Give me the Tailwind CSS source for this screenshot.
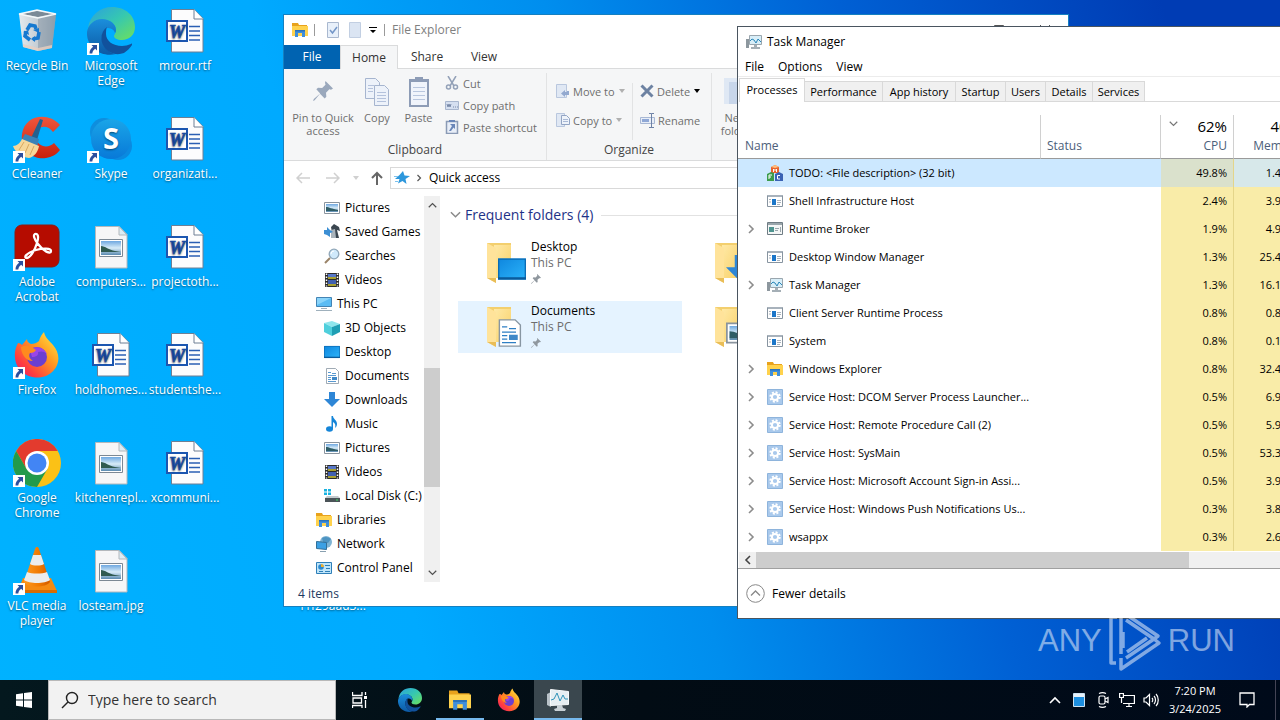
<!DOCTYPE html>
<html lang="en">
<head>
    <meta charset="UTF-8">
    <title>Desktop</title>
    <script src="https://cdn.jsdelivr.net/npm/@tailwindcss/browser@4"></script>
</head>
<body class="h-screen overflow-hidden flex flex-col text-[12px] leading-4 text-black font-['Open_Sans','Noto_Sans',sans-serif] bg-[linear-gradient(75deg,#00b2ff_0%,#00aaff_30%,#008eee_50%,#0060d4_70%,#003cb4_92%)]">

    <!-- icon library -->
    <svg class="absolute size-0" aria-hidden="true">
        <defs>
            <linearGradient id="gEdge" x1="0" y1="0" x2="1" y2="1"><stop offset="0" stop-color="#2b9fe0"/><stop offset=".5" stop-color="#36c8b0"/><stop offset="1" stop-color="#6fe05a"/></linearGradient>
            <linearGradient id="gEdge2" x1="0" y1="0" x2="0" y2="1"><stop offset="0" stop-color="#1b8fdc"/><stop offset="1" stop-color="#0c59a4"/></linearGradient>
            <linearGradient id="gBin" x1="0" y1="0" x2="1" y2="0"><stop offset="0" stop-color="#e4eaee"/><stop offset=".55" stop-color="#c3cbd2"/><stop offset="1" stop-color="#98a7b4"/></linearGradient>
            <linearGradient id="gSky" x1="0" y1="0" x2="0" y2="1"><stop offset="0" stop-color="#1aa5e8"/><stop offset="1" stop-color="#0879d8"/></linearGradient>
            <linearGradient id="gCc" x1="0" y1="0" x2="0" y2="1"><stop offset="0" stop-color="#f0563c"/><stop offset="1" stop-color="#c8200c"/></linearGradient>
            <linearGradient id="gFox" x1="1" y1="0" x2="0" y2="1"><stop offset="0" stop-color="#fff04a"/><stop offset=".4" stop-color="#ff9a20"/><stop offset=".75" stop-color="#ff3d40"/><stop offset="1" stop-color="#e01580"/></linearGradient>
            <linearGradient id="gCone" x1="0" y1="0" x2="1" y2="0"><stop offset="0" stop-color="#ff9a20"/><stop offset=".6" stop-color="#f07800"/><stop offset="1" stop-color="#d05a00"/></linearGradient>
            <linearGradient id="gPhoto" x1="0" y1="0" x2="0" y2="1"><stop offset="0" stop-color="#6fa8e0"/><stop offset=".5" stop-color="#d8ecf8"/><stop offset="1" stop-color="#5a8ab0"/></linearGradient>
            <linearGradient id="gFolder" x1="0" y1="0" x2="1" y2="1"><stop offset="0" stop-color="#ffe9a6"/><stop offset="1" stop-color="#f8d067"/></linearGradient>
            <linearGradient id="gScreen" x1="0" y1="0" x2="1" y2="1"><stop offset="0" stop-color="#0e86de"/><stop offset="1" stop-color="#2cb4fa"/></linearGradient>
        </defs>

        <symbol id="shortcut" viewBox="0 0 12 12"><path fill="#fff" d="M0 0h12v12H0z"/><path fill="#2b4f9e" d="M4.500 2H10v5.500L8.200 5.700C6.500 7 5.500 8.300 5.300 10.500H2.500C2.500 7.500 4 5.200 6.200 3.800z"/></symbol>

        <symbol id="recycle" viewBox="0 0 48 48">
            <path fill="url(#gBin)" d="M6 7l18-4 19 4-4 34-14 3-15-4z"/><path fill="#8797a5" opacity=".55" d="M25 11l18-4-4 34-14 3z"/>
            <path fill="#7b8a97" d="M9 7l15-3 15 3-14 3z"/><path fill="none" stroke="#f4f8fa" stroke-width="1.300" d="M6 7l18-4 19 4-18 4z"/>
            <path fill="#e8cfc0" opacity=".8" d="M10 37l15 4 14-3v3l-14 3-15-4z"/>
            <g fill="none" stroke="#1679d0" stroke-width="3.600"><path d="M14 23l3-5 5 1 1 3"/><path d="M26 25l-1 6-5 1"/><path d="M17 33l-5-4 1-5"/></g>
            <g fill="#1679d0"><path d="M20 23l6-2 0 5z"/><path d="M22 29v6l-4-3z"/><path d="M10 25l5-2 1 5z"/></g>
        </symbol>

        <symbol id="edge" viewBox="0 0 48 48">
            <path fill="url(#gEdge)" d="M1 21C3 8 13 0 25 0c14 0 23 9 23 20 0 8-6 13-13 13-5 0-8-2-8-4 0-1 2-3 2-6 0-6-6-10-13-10C9 13 4 16 1 21z"/>
            <path fill="url(#gEdge2)" d="M0 25c1-7 7-13 15-13 8 0 14 5 14 11 0 1 0 2-1 3-1-4-5-5-8-5-4 2-6 7-5 12 1 7 7 13 14 14-15 4-30-7-29-22z"/>
            <path fill="#11519c" d="M20 20c-6 4-7 12-4 18 4 8 13 11 21 8 3-2 6-5 8-8 0-1 0-2-1-1-3 1-6 2-9 2-9 0-16-5-16-12 0-3 0-5 1-7z"/>
        </symbol>

        <symbol id="word" viewBox="0 0 48 48">
            <path fill="#fcfcfd" stroke="#6e7f94" d="M10.500 2.500H33l9 9V45H10.500z"/><path fill="#fff" stroke="#6e7f94" d="M33 2.500V12h9"/>
            <path stroke="#2b5fb4" stroke-width="1.400" d="M28 19.500h11M28 24h11M28 28.500h11M28 33h11"/>
            <path fill="#fff" stroke="#1c56b0" stroke-width="2" d="M6 14h20v20H6z"/>
            <text x="16" y="31" text-anchor="middle" font-family="Liberation Serif,serif" font-size="18" font-weight="bold" font-style="italic" fill="#1c4fa8" stroke="#1c4fa8" stroke-width=".7">W</text>
        </symbol>

        <symbol id="ccleaner" viewBox="0 0 48 48">
            <path fill="url(#gCc)" d="M47 10C36-3 12-1 9 19c-2 16 11 26 24 24 6-1 10-3 14-8l-6-7c-6 6-17 4-18-6-1-11 11-14 17-5z"/>
            <path fill="#24618f" d="M27 4l3 1-6 20-6-2z"/><path fill="#3b82b8" d="M12 19l14 5-2 8-16-6z"/>
            <path fill="#f6d79a" d="M9 24l17 7c-1 6-5 11-10 12C8 42 2 37 0 31c4 0 7-3 9-7z"/><path fill="none" stroke="#d8a860" d="M11 27l-5 8M16 29l-4 9M21 31l-4 9"/>
        </symbol>

        <symbol id="skype" viewBox="0 0 48 48">
            <circle cx="17" cy="17" r="14" fill="#0e8ede"/><circle cx="31" cy="31" r="14" fill="#0a8ae0"/><circle cx="24" cy="24" r="20" fill="url(#gSky)"/>
            <text x="24" y="34" text-anchor="middle" font-family="Open Sans,sans-serif" font-size="29" font-weight="bold" fill="#fff">S</text>
        </symbol>

        <symbol id="acrobat" viewBox="0 0 48 48">
            <rect x="2" y="2" width="44" height="42" rx="7" fill="#b50c00" stroke="#8d1a12"/>
            <path fill="none" stroke="#fff" stroke-width="2.300" stroke-linejoin="round" d="M22 11c3-1 4 3 2 9-2 7-7 15-10 15-4 0-1-5 9-8 7-2 15-2 15 1 0 4-8 0-13-7-4-5-5-9-3-10z"/>
        </symbol>

        <symbol id="photo" viewBox="0 0 48 48">
            <path fill="#f6f6f7" stroke="#b4b8bc" d="M8.500 3.500H32l8 8V45H8.500z"/><path fill="#dcecf4" stroke="#b4b8bc" d="M32 3.500V12h8z"/>
            <path fill="#fff" stroke="#7c8894" d="M12.500 16.500h23v17h-23z"/><path fill="url(#gPhoto)" d="M14 18h20v14H14z"/><path fill="#2f5a50" d="M14 23c4 0 8 4 14 5l6 1H14z"/>
        </symbol>

        <symbol id="firefox" viewBox="0 0 48 48">
            <path fill="url(#gFox)" d="M5 12c2 0 3 1 4 2l5-6c0 3 2 4 4 5 3 0 6-1 8-3 1-4 3-7 5-9 1 6 6 9 9 13 7 8 7 18 1 25-8 10-25 10-34 0C1 32 0 21 5 12z"/>
            <circle cx="24" cy="26" r="10" fill="#6b3fd0"/><path fill="#9a45e8" d="M17 19c5-5 14-3 17 4-3-3-6-3-9-2 1 3-2 5-6 5z"/>
            <path fill="#ff8a1e" d="M8 16c6-3 11 0 15 3-1 2-3 3-6 3-2 3 0 6 3 8-8 0-12-8-12-14z"/>
        </symbol>

        <symbol id="chrome" viewBox="0 0 48 48">
            <circle cx="24" cy="24" r="24" fill="#fbc116"/><path fill="#e33b2e" d="M3.200 12A24 24 0 0 1 44.800 12H24v12L13.600 30z"/><path fill="#229a4b" d="M3.200 12A24 24 0 0 0 24 48l10.400-18L24 24l-10.400 6z"/>
            <circle cx="24" cy="24" r="12" fill="#fff"/><circle cx="24" cy="24" r="9.500" fill="#4285f4"/>
        </symbol>

        <symbol id="vlc" viewBox="0 0 48 48">
            <path fill="#f58a12" d="M10 31h28l6 13H5z"/><path fill="#d86c04" d="M5 43h39v3H5z"/>
            <path fill="url(#gCone)" d="M22 2c1-3 3-3 4 0l11 33c-4 6-22 6-26 0z"/>
            <path fill="#ececec" d="M20 8h8l3 9c-3 2-11 2-14 0zM14 25c5 2 15 2 20 0l3 8c-5 4-21 4-26 0z"/>
        </symbol>

        <symbol id="explorer" viewBox="0 0 16 16"><path fill="#e8a21c" d="M0 1h6l1 2h8v3H0z"/><path fill="#ffd24d" d="M0 4h16v10H0z"/><path fill="#3f8edb" d="M3 8h10v7h-3v-4H6v4H3z"/><path fill="#2a71b8" d="M3 8h10v1.500H3z"/></symbol>
        <symbol id="pictures" viewBox="0 0 16 16"><path fill="#fff" stroke="#8a949e" d="M.5 2.500h15v11H.5z"/><path fill="url(#gPhoto)" d="M2 4h12v8H2z"/><path fill="#2f5d66" d="M2 7c3 0 6 2 12 3v1H2z"/></symbol>
        <symbol id="games" viewBox="0 0 16 16"><path fill="#3b4650" d="M7 3l3-3 5 3 1 4-3-1 2 8H9z"/><path fill="#aab4bc" d="M7 6l4-1 1 9H7z"/><path fill="#3c8fd4" d="M0 6h3V3l3 3 3 2-3 1v4l-3-2-3-1z"/></symbol>
        <symbol id="searches" viewBox="0 0 16 16"><path stroke="#9a8468" stroke-width="2" d="M1 15l5-5"/><circle cx="10" cy="6" r="4.800" fill="#cfe9fb" stroke="#8fa6b8" stroke-width="1.300"/><path stroke="#fff" fill="none" d="M7 6a3 3 0 0 1 3-3"/></symbol>
        <symbol id="videos" viewBox="0 0 16 16"><path fill="#2b2b2b" d="M1 1h14v14H1z"/><path fill="#5878c8" d="M4 2h8v5H4z"/><path fill="#a8a030" d="M4 5h8v2H4zM4 11h8v3H4z"/><path fill="#4060b0" d="M4 8h8v4H4z"/><path stroke="#fff" stroke-width="1.500" stroke-dasharray="1.500 1.500" d="M2.500 1.500v13M13.500 1.500v13"/></symbol>
        <symbol id="pc" viewBox="0 0 16 16"><path fill="#5bbcf4" stroke="#4484b4" d="M.5 1.500h15v9H.5z"/><path fill="#8ad4fa" d="M1 2h14L1 9z"/><path stroke="#9fb0bc" d="M5 12.500h6M0 14.500h16"/></symbol>
        <symbol id="cube" viewBox="0 0 16 16"><path fill="#8fe6ec" d="M0 3l8-2 8 3-8 3z"/><path fill="#4fcfdc" d="M0 3l8 4v9l-8-4z"/><path fill="#1f9fb4" d="M16 4L8 7v9l8-4z"/></symbol>
        <symbol id="desktop" viewBox="0 0 16 16"><path fill="url(#gScreen)" d="M0 2h16v12H0z"/><path fill="none" stroke="#0b69b0" stroke-width=".7" d="M.4 2.400h15.200v11.200H.4z"/><path fill="#0a5b9c" d="M0 12.700h16V14H0z"/></symbol>
        <symbol id="documents" viewBox="0 0 16 16"><path fill="#fff" stroke="#8896a2" stroke-width=".8" d="M2.500.5h9l3 3v12h-12z"/><path stroke="#2e7fc4" stroke-width=".8" d="M4 4.500h3M8 5.500h4M4 7.500h8M4 9.500h3M4 11.500h3M4 13.500h8"/><path fill="#3f88c8" d="M8 9h5v3H8z"/></symbol>
        <symbol id="downloads" viewBox="0 0 16 16"><path fill="#2e86d6" d="M5 0h6v7h5l-8 8-8-8h5z"/></symbol>
        <symbol id="music" viewBox="0 0 16 16"><ellipse cx="5.500" cy="13" rx="3.500" ry="2.700" fill="#1585d8"/><path fill="#1585d8" d="M7.500 0H9c0 3 4 4 4 8 0 2-1 3-2 4 1-3 0-5-2-6v7H7.500z"/></symbol>
        <symbol id="disk" viewBox="0 0 16 16"><path fill="#18b2e0" d="M0 1h3v2.500H0zM4 1h3v2.500H4zM0 4.500h3V7H0zM4 4.500h3V7H4z"/><path fill="#c4cace" d="M3 8h11l2 2H1z"/><path fill="#4b5458" d="M1 10h15v4H1z"/><path fill="#3fe060" d="M12 11.500h2v1h-2z"/></symbol>
        <symbol id="network" viewBox="0 0 16 16"><circle cx="10" cy="6" r="6" fill="#7fb4d4"/><path fill="#4d94c2" d="M6 2c3-2 7-1 9 1l-3 4-5-1z"/><path fill="#3ba0e4" stroke="#316f98" d="M.5 5.500l10 1v7l-10-1z"/><path stroke="#88a0b0" d="M4 15.500h6"/></symbol>
        <symbol id="control" viewBox="0 0 16 16"><path fill="#bfe5fa" stroke="#2e7fb8" d="M.5 2.500h15v11H.5z"/><circle cx="5" cy="7" r="2.800" fill="#2c8ad0"/><path fill="#f0b030" d="M5 7V4a3 3 0 0 1 3 3z"/><path stroke="#2e7fb8" d="M9 5.500h5M10 8.500h4M3 11.500h4M9 11.500h5"/></symbol>

        <symbol id="blocks" viewBox="0 0 16 16"><path fill="#e8632c" d="M4 2l4-2 4 2v6H4z"/><path fill="#ffc080" d="M4 2l4-2 4 2-4 1z"/><path fill="#3c9c4c" d="M0 9l4-2 3 1v8H0z"/><path fill="#3a62b4" d="M8 9l4-2 4 2v7H8z"/><path stroke="#fff" fill="none" d="M2 14v-4h3M2 12h2M13 10.500h-2.500v3.500H13M6.500 7V4L8 5.500 9.500 4v3"/></symbol>
        <symbol id="exe" viewBox="0 0 16 16"><path fill="#fff" stroke="#8794a0" d="M.5 2.500h15v11H.5z"/><path fill="#a8b2bc" d="M1 2h14v2H1z"/><path fill="#1c76c8" d="M5 6h4v6H5z"/><path stroke="#a8b2bc" d="M2 6.500h2M2 9h2M10 7.500h4M10 9.500h4M10 11.500h3"/></symbol>
        <symbol id="broker" viewBox="0 0 16 16"><path fill="#f4f6f6" stroke="#6f7c84" d="M.5 1.500h15v12H.5z"/><path fill="#9aa6ac" d="M1 2h14v2H1z"/><path fill="#4f9490" d="M2 6h5v5H2z"/><path stroke="#9aa6ac" d="M8 7.500h4M8 9.500h3M13.500 6v5"/></symbol>
        <symbol id="taskmgr" viewBox="0 0 16 16"><path fill="#8d979e" d="M0 5h3v9H0z"/><path fill="#d8eef8" stroke="#9aa6ae" d="M3.500 1.500h12v9h-12z"/><path fill="none" stroke="#2a86b8" d="M4 7l2-2 2 1 2 3 2-4 3 3"/><path fill="#a5afb6" d="M8 11h3v2h3v2H5v-2h3z"/></symbol>
        <symbol id="taskmgr-large" viewBox="0 0 24 24"><path fill="#b9c2c8" d="M1 6l4-2v15l-4-2z"/><path fill="#e6eef2" stroke="#f8fafb" d="M4.500 1.500l18 2v13l-18 1z"/><path fill="none" stroke="#2f93b8" d="M5 12l3-1 3-6 3 8 3-6 2 4h3"/><path fill="#c8d0d5" d="M11 17l5 0 1 3 3 1-1 2H9l-1-2 3-1z"/></symbol>
        <symbol id="gear" viewBox="0 0 16 16"><path fill="#a9c9ec" stroke="#8eb4dc" d="M.5.500h15v15H.5z"/><circle cx="8" cy="8" r="4.700" fill="none" stroke="#fff" stroke-width="2" stroke-dasharray="2 1.690"/><circle cx="8" cy="8" r="3.100" fill="none" stroke="#fff" stroke-width="2"/></symbol>

        <symbol id="folder" viewBox="0 0 40 40"><path fill="#f3cf6e" d="M1 0h24v35H1z"/><path fill="url(#gFolder)" d="M8 2h17v33H8z"/><path fill="#ffe39a" d="M1 0l9 5v35L1 35z"/><path fill="#e9bd57" d="M1 35l9 5v-5z"/></symbol>
        <symbol id="pin" viewBox="0 0 12 12"><path fill="currentColor" d="M7.500 0L12 4.500l-1.200.7-1-.2-2 2 .2 2.500-1 1L4.200 7.700 1 11.500 0 12l.5-1.200L4.300 7.500 2 5l1-1 2.500.2 2-2-.3-1.200z"/></symbol>
        <symbol id="chev" viewBox="0 0 8 10"><path fill="none" stroke="currentColor" stroke-width="1.600" d="M2 1l4 4-4 4"/></symbol>
        <symbol id="vee" viewBox="0 0 12 8"><path fill="none" stroke="currentColor" stroke-width="1.600" d="M1 1l5 5 5-5"/></symbol>
        <symbol id="drop" viewBox="0 0 8 8"><path fill="currentColor" d="M1 2h6L4 6z"/></symbol>
    </svg>

    <main class="relative grow min-h-0 overflow-hidden">
        <ul id="icons" class="grid grid-flow-col grid-rows-[repeat(6,108px)] auto-cols-[74px] w-max text-white leading-[15px] text-center [text-shadow:0_1px_2px_rgb(0_0_0/0.5)]"></ul>

        <!-- File Explorer -->
        <section class="absolute left-[283px] top-[14px] w-[786px] h-[593px] flex flex-col bg-white border border-[#1580c0]">
            <header class="h-[30px] flex items-center pl-2 text-[#808080]">
                <svg class="size-4"><use href="#explorer"/></svg>
                <span class="w-px h-3 bg-[#9a9a9a] ml-[6px] mr-3"></span>
                <svg class="w-3 h-4" viewBox="0 0 12 16"><path fill="#e8f0fa" stroke="#a9b8cf" d="M.5.500h11v15H.5z"/><path fill="none" stroke="#7396c8" stroke-width="1.500" d="M3 8l2.500 3L10 5"/></svg>
                <svg class="w-3 h-4 ml-[10px]" viewBox="0 0 12 16"><path fill="#dbe5f3" stroke="#c2cfe2" d="M.5.500h11v15H.5z"/></svg>
                <svg class="size-2 ml-2 text-black" viewBox="0 0 8 8"><path fill="currentColor" d="M0 1h8v1H0zM1 4h6L4 7z"/></svg>
                <span class="w-px h-3 bg-[#9a9a9a] mx-[7px]"></span>
                <h2>File Explorer</h2>
                <div class="flex ml-auto text-[#555]">
                    <button aria-label="Minimize" class="w-[46px] grid place-items-center"><svg class="size-[10px]" viewBox="0 0 10 10"><path stroke="currentColor" d="M0 5.500h10"/></svg></button>
                    <button aria-label="Maximize" class="w-[46px] grid place-items-center"><svg class="size-[10px]" viewBox="0 0 10 10"><path fill="none" stroke="currentColor" d="M.5.500h9v9h-9z"/></svg></button>
                    <button aria-label="Close" class="w-[46px] grid place-items-center"><svg class="size-[10px]" viewBox="0 0 10 10"><path stroke="currentColor" d="M0 0l10 10M10 0L0 10"/></svg></button>
                </div>
            </header>
            <nav class="h-6 flex text-[#333]">
                <button class="w-14 bg-[#0063b1] text-white">File</button>
                <button class="w-[58px] bg-[#f5f6f7] border-x border-t border-[#dadbdc]">Home</button>
                <div class="grow flex border-b border-[#dadbdc]">
                    <button class="w-[58px]">Share</button>
                    <button class="w-14">View</button>
                </div>
            </nav>

            <!-- ribbon -->
            <div class="h-[92px] flex bg-[#f5f6f7] border-b border-[#dadbdc] text-[#6e6e6e] text-[11px] leading-[13px]">
                <div class="w-[263px] flex flex-col border-r border-[#e2e3e4] mt-1">
                    <div class="grow flex">
                        <button class="w-[78px] flex flex-col items-center gap-[2px]">
                            <span class="h-9 grid place-items-center"><svg class="size-5 text-[#9aa8bc]"><use href="#pin"/></svg></span>
                            <span>Pin to Quick<br>access</span>
                        </button>
                        <button class="w-[30px] flex flex-col items-center gap-[2px]">
                            <svg class="w-[26px] h-9" viewBox="0 0 26 36"><g fill="#edf2fa" stroke="#a6b5cf"><path d="M1.500 5.500h10l4 4v16h-14z"/><path d="M10.500 12.500h10l4 4v16h-14z"/></g><path stroke="#b4c2dc" d="M4 12.500h6M4 15.500h5M4 18.500h5M13 19.500h9M13 22.500h9M13 25.500h9M13 28.500h9"/></svg>
                            <span>Copy</span>
                        </button>
                        <button class="w-[53px] flex flex-col items-center gap-[2px]">
                            <svg class="w-6 h-9" viewBox="0 0 24 36"><path fill="#8d9cb6" d="M2 6h20v28H2z"/><path fill="#f0f4fb" d="M4 9h16v23H4z"/><path fill="#8d9cb6" d="M8 4h8v5H8z"/><path stroke="#b8c6de" d="M6 14.500h12M6 18.500h12M6 22.500h12M6 26.500h12"/></svg>
                            <span>Paste</span>
                        </button>
                        <div class="flex flex-col items-start gap-[6px] pt-[2px]">
                            <button class="h-4 flex items-center gap-1"><svg class="size-[14px]" viewBox="0 0 14 14"><path fill="none" stroke="#93a1b8" stroke-width="1.500" d="M3 0l6 10M11 0L5 10"/><g fill="none" stroke="#93a1b8" stroke-width="1.500"><circle cx="3.500" cy="11" r="2"/><circle cx="10.500" cy="11" r="2"/></g></svg>Cut</button>
                            <button class="h-4 flex items-center gap-1"><svg class="size-[14px]" viewBox="0 0 14 14"><path fill="#d5dff0" stroke="#a8b6ce" d="M.5 3.500h13v8H.5z"/><path fill="none" stroke="#7889a8" d="M2 6l1 3 1-3 1 3 1-3M8 9h1M10 9h1M12 9h1"/></svg>Copy path</button>
                            <button class="h-4 flex items-center gap-1"><svg class="size-[14px]" viewBox="0 0 14 14"><path fill="#e8eef8" stroke="#8a9ab5" stroke-width="1.500" d="M1.500 1.500h11v12h-11z"/><path fill="#6a86b8" d="M5 4h5v5L8.500 7.500 6 11H4l3-5zM4 0h6v2H4z"/></svg>Paste shortcut</button>
                        </div>
                    </div>
                    <h3 class="text-center text-[#444] text-[12px] leading-5">Clipboard</h3>
                </div>
                <div class="w-[165px] flex flex-col border-r border-[#e2e3e4] mt-1">
                    <div class="grow flex pl-[9px] pt-[10px]">
                        <div class="w-[77px] flex flex-col gap-[13px] items-start border-r border-[#e2e3e4]">
                            <button class="h-4 flex items-center gap-[3px]"><svg class="size-[14px]" viewBox="0 0 14 14"><path fill="#e0e8f4" stroke="#b9c7de" d="M.5.500h10v13H.5z"/><path fill="#93a9cf" d="M13 7v4H9v2L5 9.500 9 6v2h2V7z"/></svg>Move to<svg class="size-2 text-[#b0b0b0]"><use href="#drop"/></svg></button>
                            <button class="h-4 flex items-center gap-[3px]"><svg class="size-[14px]" viewBox="0 0 14 14"><path fill="#e0e8f4" stroke="#b9c7de" d="M.5.500h8v13h-8z"/><path fill="#eef3fa" stroke="#93a5c4" d="M5.500 2.500h5l3 3v6h-8z"/><path stroke="#a9b9d6" d="M7 6.500h5M7 8.500h5"/></svg>Copy to<svg class="size-2 text-[#b0b0b0]"><use href="#drop"/></svg></button>
                        </div>
                        <div class="flex flex-col gap-[13px] items-start pl-[7px]">
                            <button class="h-4 flex items-center gap-[3px]"><svg class="size-[14px]" viewBox="0 0 14 14"><path stroke="#6d82a2" stroke-width="3" d="M1.500 1.500l11 11M12.500 1.500l-11 11"/></svg>Delete<svg class="size-2 text-black"><use href="#drop"/></svg></button>
                            <button class="h-4 flex items-center gap-[3px]"><svg class="size-[15px]" viewBox="0 0 15 15"><path fill="#e8eef8" stroke="#a8b8d4" d="M.5 4.500h14v6H.5z"/><path fill="#8fa8d6" d="M2 6h7v3H2z"/><path fill="none" stroke="#6e82a6" d="M9 .5h2.500v14M14 .5h-2.500M9 14.500h5"/></svg>Rename</button>
                        </div>
                    </div>
                    <h3 class="text-center text-[#444] text-[12px] leading-5">Organize</h3>
                </div>
                <div class="flex flex-col mt-1 pl-[6px]">
                    <button class="w-9 flex flex-col items-center gap-[2px]"><svg class="w-6 h-9" viewBox="0 0 24 36"><path fill="#dfe8f4" d="M0 5h18v26H0z"/><path fill="#c8d6ea" d="M5 9h14v22H5z"/></svg><span>New<br>folder</span></button>
                </div>
            </div>

            <!-- address bar -->
            <div class="h-[34px] flex items-center pl-3 text-[#d0d0d0]">
                <button aria-label="Back"><svg class="size-[14px]" viewBox="0 0 14 14"><path fill="none" stroke="currentColor" stroke-width="1.500" d="M14 7H1M6 2L1 7l5 5"/></svg></button>
                <button aria-label="Forward" class="ml-4"><svg class="size-[14px]" viewBox="0 0 14 14"><path fill="none" stroke="currentColor" stroke-width="1.500" d="M0 7h13M8 2l5 5-5 5"/></svg></button>
                <button aria-label="Recent locations" class="ml-3"><svg class="size-2"><use href="#drop"/></svg></button>
                <button aria-label="Up" class="ml-[10px] text-[#666]"><svg class="size-[14px]" viewBox="0 0 14 14"><path fill="none" stroke="currentColor" stroke-width="2" d="M7 14V2M2 7l5-5 5 5"/></svg></button>
                <div class="grow h-[22px] ml-[6px] pl-[3px] flex items-center gap-[6px] border border-[#d9d9d9] text-black">
                    <svg class="size-4" viewBox="0 0 16 16"><path fill="#2d97dc" d="M9 1l1.500 4.500L16 6l-4.500 3 1 5L8.500 11 4 13.500 5.500 9H1L5.500 5z"/><path stroke="#7cc2ee" d="M0 6.500h4M1 11.500h3"/></svg>
                    <svg class="w-[6px] h-2 text-[#555]"><use href="#chev"/></svg>
                    <button class="ml-px">Quick access</button>
                </div>
            </div>

            <div class="grow min-h-0 flex pt-px">
                <ul id="tree" class="w-[140px] overflow-hidden"></ul>
                <div class="w-4 flex flex-col items-center justify-between py-[5px] bg-[#f0f0f0] relative text-[#505050]">
                    <svg class="w-[9px] h-2 rotate-180"><use href="#vee"/></svg>
                    <div class="absolute top-[172px] inset-x-0 h-[119px] bg-[#cdcdcd]"></div>
                    <svg class="w-[9px] h-2"><use href="#vee"/></svg>
                </div>
                <div class="grow pt-2 pl-[18px]">
                    <h3 class="flex items-center gap-2 -ml-2 mr-4 mb-[11px] text-[14px] leading-[22px] text-[#1e3287]">
                        <span class="flex items-center gap-1"><svg class="w-[11px] h-2 text-[#8a8a8a]"><use href="#vee"/></svg>Frequent folders (4)</span>
                        <span class="grow h-px bg-[#e2e2e2]"></span>
                    </h3>
                    <div id="tiles" class="grid grid-cols-[224px_224px] gap-x-1 gap-y-3"></div>
                </div>
            </div>
            <footer class="h-6 px-[14px] leading-6 text-[#1e3a5f]">4 items</footer>
        </section>

        <!-- Task Manager -->
        <section class="absolute left-[737px] top-[26px] w-[640px] h-[593px] flex flex-col bg-white border border-[#4a5560]">
            <header class="h-[30px] flex items-center gap-[5px] pl-2">
                <svg class="size-4"><use href="#taskmgr"/></svg>
                <h2>Task Manager</h2>
            </header>
            <nav class="h-5 flex gap-[14px] pl-[7px] border-b border-[#ececec]">
                <button>File</button>
                <button>Options</button>
                <button>View</button>
            </nav>
            <div role="tablist" class="h-[25px] flex items-end pl-px text-[11px]">
                <button role="tab" aria-selected="true" class="h-[24px] w-[66px] pb-px bg-white border-x border-t border-[#d9d9d9]">Processes</button>
                <button role="tab" class="h-[21px] w-[78px] bg-[#f0f0f0] border-r border-y border-[#d9d9d9]">Performance</button>
                <button role="tab" class="h-[21px] w-[73px] bg-[#f0f0f0] border-r border-y border-[#d9d9d9]">App history</button>
                <button role="tab" class="h-[21px] w-[50px] bg-[#f0f0f0] border-r border-y border-[#d9d9d9]">Startup</button>
                <button role="tab" class="h-[21px] w-[40px] bg-[#f0f0f0] border-r border-y border-[#d9d9d9]">Users</button>
                <button role="tab" class="h-[21px] w-[47px] bg-[#f0f0f0] border-r border-y border-[#d9d9d9]">Details</button>
                <button role="tab" class="h-[21px] w-[52px] bg-[#f0f0f0] border-r border-y border-[#d9d9d9]">Services</button>
                <span class="grow h-px bg-[#d9d9d9]"></span>
            </div>
            <table class="table-fixed w-full mt-[13px] border-separate border-spacing-0">
                <colgroup><col class="w-[303px]"><col class="w-[120px]"><col class="w-[73px]"><col class="w-[73px]"><col></colgroup>
                <thead>
                    <tr class="h-[44px] text-[#4c607a] align-bottom [&>th]:font-normal [&>th]:border-b [&>th]:border-r [&>th]:border-b-[#9a9a9a] [&>th]:border-r-[#d0d0d0] [&>th]:pb-[4px]">
                        <th class="text-left pl-[7px]">Name</th>
                        <th class="text-left pl-[6px]">Status</th>
                        <th class="text-right pr-[6px] relative">
                            <svg class="absolute left-2 top-[5px] w-[9px] h-2 text-[#777]"><use href="#vee"/></svg>
                            <span class="block text-[15px] leading-[22px] mb-px text-black">62%</span>CPU</th>
                        <th class="text-right pr-[6px]"><span class="block text-[15px] leading-[22px] mb-px text-black">40%</span>Memory</th>
                        <th></th>
                    </tr>
                </thead>
                <tbody id="processes" class="text-[11px]"></tbody>
            </table>
            <div class="mt-px h-4 flex bg-[#f0f0f0] border-x border-white">
                <span class="w-[17px] grid place-items-center text-[#444]"><svg class="w-2 h-[10px] rotate-180"><use href="#chev"/></svg></span>
                <span class="w-[433px] h-4 bg-[#cdcdcd]"></span>
            </div>
            <footer class="grow flex items-center pl-2 border-t border-[#a0a0a0]">
                <button class="flex items-center gap-[7px]">
                    <svg class="size-[19px]" viewBox="0 0 19 19"><circle cx="9.500" cy="9.500" r="8.800" fill="none" stroke="#888"/><path fill="none" stroke="#888" stroke-width="1.300" d="M5 11.500L9.500 7l4.500 4.500"/></svg>
                    Fewer details
                </button>
            </footer>
        </section>

        <!-- watermark -->
        <div class="absolute left-[1038px] bottom-2 h-16 flex items-center gap-[6px] text-white/50 text-[31px] leading-none font-['Liberation_Sans',sans-serif]">
            <span>ANY</span>
            <svg class="w-[54px] h-16" viewBox="0 0 54 64"><g fill="none" stroke="#fff" stroke-opacity=".5" stroke-width="3.500" stroke-linejoin="round"><path d="M9 9H3v46h5M13 46V3l37 25-4 3-28-19M13 50v11l38-26-5-4-28 19M15 40V24M19 44l20-14"/></g></svg>
            <span>RUN</span>
        </div>
    </main>

    <!-- taskbar -->
    <footer class="relative z-10 h-10 shrink-0 flex items-center bg-linear-to-r from-[#04181e] via-[#020c14] to-[#000a1a] text-white">
        <button aria-label="Start" class="w-12 grid place-items-center"><svg class="size-4" viewBox="0 0 16 16"><path fill="#fff" d="M0 2.200l7-1v6.300H0zM8 1.100L16 0v7.500H8zM0 8.500h7v6.300l-7-1zM8 8.500h8V16l-8-1.100z"/></svg></button>
        <label class="w-[288px] h-10 flex items-center gap-[9px] px-3 bg-[#f2f2f2] border border-[#b8b8b8] text-[#222]">
            <svg class="size-[18px]" viewBox="0 0 18 18"><circle cx="11" cy="7" r="5.500" fill="none" stroke="currentColor" stroke-width="1.400"/><path stroke="currentColor" stroke-width="1.400" d="M7 11l-6 6"/></svg>
            <input type="text" aria-label="Search" placeholder="Type here to search" class="grow min-w-0 text-[14px] placeholder:text-[#333] focus:outline-none">
        </label>
        <button aria-label="Task view" class="w-12 h-10 grid place-items-center"><svg class="size-4" viewBox="0 0 16 16"><path fill="none" stroke="#fff" stroke-width="1.300" d="M.5 0v3.500h9.500V0M1 6h8.500v5H1zM.5 16v-2.500h9.500V16M13.500 0v3M13.500 8v8"/><path fill="#fff" d="M12 4h3v3h-3z"/></svg></button>
        <button aria-label="Microsoft Edge" class="w-[52px] h-10 grid place-items-center"><svg class="size-6"><use href="#edge"/></svg></button>
        <button aria-label="File Explorer" class="w-12 h-10 grid place-items-center border-b-2 border-[#76b9ed] pt-[2px]"><svg class="w-[22px] h-6"><use href="#explorer"/></svg></button>
        <button aria-label="Firefox" class="w-[50px] h-10 grid place-items-center"><svg class="size-6"><use href="#firefox"/></svg></button>
        <button aria-label="Task Manager" class="w-12 h-10 grid place-items-center bg-[#3a474e] border-b-2 border-[#76b9ed] pt-[2px]"><svg class="size-6"><use href="#taskmgr-large"/></svg></button>
        <div class="ml-auto flex items-center gap-2">
            <svg class="w-3 h-2 rotate-180"><use href="#vee"/></svg>
            <svg class="w-4 h-[14px] ml-[2px]" viewBox="0 0 16 14"><path fill="#1d8fe0" stroke="#cfe3f2" d="M2.500.500h11v13h-11z"/><path fill="#e8f2fa" d="M3 1h10v3H3z"/></svg>
            <svg class="size-4" viewBox="0 0 16 16"><g fill="none" stroke="#fff" stroke-width="1.200"><rect x="4" y="4" width="6" height="8" rx="1.500"/><path d="M10 7l3-1.500v5L10 9M4 1.500c2-1 5-1 7 0M4 14.500c2 1 5 1 7 0"/></g></svg>
            <svg class="size-4" viewBox="0 0 16 16"><g fill="none" stroke="#fff" stroke-width="1.200"><path d="M5 3.500h10.400v8H4M7 14.500h6M10 11.500v3M.6 1.500h3.800v4H.6zM2.500 5.500V11"/></g></svg>
            <svg class="size-4" viewBox="0 0 16 16"><g fill="none" stroke="#fff" stroke-width="1.200"><path d="M1 6h2l3.500-3.500v11L3 10H1zM9 6c1 1 1 3 0 4M11 4c2 2 2 6 0 8M13 2c3 3 3 9 0 12"/></g></svg>
            <time class="w-[56px] text-center text-[11px] leading-[18px] whitespace-nowrap">7:20 PM<br>3/24/2025</time>
            <svg class="size-4 ml-2" viewBox="0 0 16 16"><path fill="none" stroke="#fff" stroke-width="1.300" d="M1 1h14v11.500h-4.500L8 15v-2.500H1z"/></svg>
            <span class="h-10 w-[13px] mr-1 border-r border-[#445]"></span>
        </div>
    </footer>

    <script>
        // [icon, label, has shortcut arrow, extra classes]
        const icons = [
            ['recycle', 'Recycle Bin', false], ['ccleaner', 'CCleaner', true], ['acrobat', 'Adobe Acrobat', true],
            ['firefox', 'Firefox', true], ['chrome', 'Google Chrome', true], ['vlc', 'VLC media player', true],
            ['edge', 'Microsoft Edge', true], ['skype', 'Skype', true], ['photo', 'computers...', false],
            ['word', 'holdhomes...', false], ['photo', 'kitchenrepl...', false], ['photo', 'losteam.jpg', false],
            ['word', 'mrour.rtf', false], ['word', 'organizati...', false], ['word', 'projectoth...', false],
            ['word', 'studentshe...', false], ['word', 'xcommuni...', false],
            ['word', 'f1f29aad3...', false, 'col-start-5 row-start-6'],
        ];
        document.getElementById('icons').innerHTML = icons.map(([icon, label, arrow, cls = '']) => `
            <li class="flex flex-col items-center pt-[7px] ${cls}">
                <span class="relative size-12 mb-[3px]">
                    <svg class="size-12"><use href="#${icon}"/></svg>
                    ${arrow ? '<svg class="absolute left-0 bottom-0 size-3"><use href="#shortcut"/></svg>' : ''}
                </span>
                <span class="w-[74px]">${label}</span>
            </li>`).join('');

        const tree = [
            ['pictures', 'Pictures', 2], ['games', 'Saved Games', 2], ['searches', 'Searches', 2], ['videos', 'Videos', 2],
            ['pc', 'This PC', 1], ['cube', '3D Objects', 2], ['desktop', 'Desktop', 2], ['documents', 'Documents', 2],
            ['downloads', 'Downloads', 2], ['music', 'Music', 2], ['pictures', 'Pictures', 2], ['videos', 'Videos', 2],
            ['disk', 'Local Disk (C:)', 2], ['explorer', 'Libraries', 1], ['network', 'Network', 1], ['control', 'Control Panel', 1],
        ];
        document.getElementById('tree').innerHTML = tree.map(([icon, label, level]) => `
            <li class="h-6 flex items-center gap-[5px] whitespace-nowrap ${level == 2 ? 'pl-10' : 'pl-8'}">
                <svg class="size-4 shrink-0"><use href="#${icon}"/></svg>${label}
            </li>`).join('');

        const tiles = [
            ['desktop', 'Desktop', 'size-7 right-0 bottom-0'], ['downloads', 'Downloads', 'size-7 right-0 bottom-0'],
            ['documents', 'Documents', 'size-7 right-[3px] bottom-0'], ['pictures', 'Pictures', 'size-7 right-0 bottom-0'],
        ];
        document.getElementById('tiles').innerHTML = tiles.map(([icon, label, cls]) => `
            <button class="h-[52px] flex items-center text-left pl-7 gap-[5px] ${label == 'Documents' ? 'bg-[#e5f3ff]' : ''}">
                <span class="relative size-10">
                    <svg class="size-10"><use href="#folder"/></svg>
                    <svg class="absolute ${cls}"><use href="#${icon}"/></svg>
                </span>
                <span>${label}<span class="block text-[#6d6d6d]">This PC</span>
                    <svg class="size-[10px] my-[3px] text-[#8f979e]"><use href="#pin"/></svg></span>
            </button>`).join('');

        // [icon, name, expandable, cpu, memory]
        const processes = [
            ['blocks', 'TODO: &lt;File description&gt; (32 bit)', 0, '49.8%', '1.4'],
            ['exe', 'Shell Infrastructure Host', 0, '2.4%', '3.9'],
            ['broker', 'Runtime Broker', 1, '1.9%', '4.9'],
            ['exe', 'Desktop Window Manager', 0, '1.3%', '25.4'],
            ['taskmgr', 'Task Manager', 1, '1.3%', '16.1'],
            ['exe', 'Client Server Runtime Process', 0, '0.8%', '0.8'],
            ['exe', 'System', 0, '0.8%', '0.1'],
            ['explorer', 'Windows Explorer', 1, '0.8%', '32.4'],
            ['gear', 'Service Host: DCOM Server Process Launcher...', 1, '0.5%', '6.9'],
            ['gear', 'Service Host: Remote Procedure Call (2)', 1, '0.5%', '5.9'],
            ['gear', 'Service Host: SysMain', 1, '0.5%', '53.3'],
            ['gear', 'Service Host: Microsoft Account Sign-in Assi...', 1, '0.5%', '3.9'],
            ['gear', 'Service Host: Windows Push Notifications Us...', 1, '0.3%', '3.8'],
            ['gear', 'wsappx', 1, '0.3%', '2.6'],
        ];
        document.getElementById('processes').innerHTML = processes.map(([icon, name, expand, cpu, memory], i) => {
            const selected = i == 0;
            return `
            <tr class="h-7 ${selected ? 'bg-[#cce8ff]' : ''}">
                <td class="pl-[9px]"><div class="flex items-center whitespace-nowrap">
                    <span class="w-5 shrink-0">${expand ? '<svg class="w-2 h-[10px] text-[#8c8c8c]"><use href="#chev"/></svg>' : ''}</span>
                    <svg class="size-4 mr-[6px] shrink-0"><use href="#${icon}"/></svg>${name}
                </div></td>
                <td></td>
                <td class="text-right pr-[6px] border-r border-[#e4d58a] ${selected ? 'bg-[#dae1cc]' : 'bg-[#f9eca8]'}">${cpu}</td>
                <td class="text-right pr-[6px] ${selected ? 'bg-[#d7e8ea]' : 'bg-[#f9eca8]'}">${memory} MB</td>
                <td class="${selected ? '' : 'bg-[#fff4c4]'}"></td>
            </tr>`;
        }).join('');
    </script>
</body>
</html>
